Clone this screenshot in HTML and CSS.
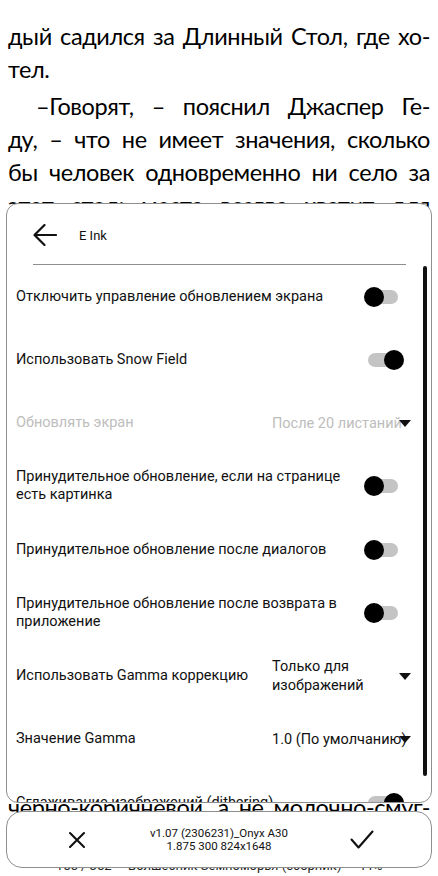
FILE: index.html
```html
<!DOCTYPE html>
<html lang="ru">
<head>
<meta charset="utf-8">
<title>E Ink</title>
<link rel="stylesheet" href="styles.css">
</head>
<body>
<div class="page">
  <div class="book">
    <p class="par">
      <span class="ln">дый садился за Длинный Стол, где хо-</span>
      <span class="ln end">тел.</span>
    </p>
    <p class="par">
      <span class="ln ind">–Говорят, – пояснил Джаспер Ге-</span>
      <span class="ln">ду, – что не имеет значения, сколько</span>
      <span class="ln">бы человек одновременно ни село за</span>
      <span class="ln">этот стол: места всегда хватит для</span>
      <span class="ln">всех, и стол будет такой длины,</span>
      <span class="ln">как нужно. Одни полагают, что</span>
      <span class="ln">это сделано с помощью магии,</span>
      <span class="ln">другие – что стол растёт сам,</span>
      <span class="ln">как дерево, а третьи говорят,</span>
      <span class="ln end">что всё это выдумки.</span>
    </p>
    <p class="par">
      <span class="ln ind">Гед промолчал. Он смотрел</span>
      <span class="ln">на окна, за которыми уже</span>
      <span class="ln">сгущались сумерки, и думал</span>
      <span class="ln">о том, как далеко теперь его</span>
      <span class="ln">родной остров. Джаспер был</span>
      <span class="ln">одет в плащ с серебряной</span>
      <span class="ln end">застёжкой.</span>
    </p>
    <p class="par">
      <span class="ln ind">Рядом с ним сидел другой</span>
      <span class="ln">юноша, коренастый, по имени</span>
      <span class="ln">Ветч. Он был родом с Восточ-</span>
      <span class="ln">ного Предела, и кожа у него была</span>
      <span class="ln">черно-коричневой, а не молочно-смуг-</span>
      <span class="ln">лой, как у людей Внутренних</span>
      <span class="ln end">островов.</span>
    </p>
  </div>
  <div class="footer">155 / 352 — Волшебник Земноморья (сборник) — 44%</div>

  <div class="dialog">
    <div class="head">
      <svg class="back" width="24" height="22" viewBox="0 0 24 22">
        <path d="M1.5 11H23M11.5 1L1.5 11L11.5 21" fill="none" stroke="#111" stroke-width="2.2" stroke-linecap="round" stroke-linejoin="round"/>
      </svg>
      <span class="title">E Ink</span>
    </div>
    <div class="rule"></div>
    <div class="list">
      <div class="row">
        <span class="label">Отключить управление обновлением экрана</span>
        <span class="switch"><span class="track"></span><span class="thumb"></span></span>
      </div>
      <div class="row">
        <span class="label">Использовать Snow Field</span>
        <span class="switch on"><span class="track"></span><span class="thumb"></span></span>
      </div>
      <div class="row disabled">
        <span class="label">Обновлять экран</span>
        <span class="value nowrap">После 20 листаний</span>
        <span class="caret"></span>
      </div>
      <div class="row">
        <span class="label">Принудительное обновление, если на странице есть картинка</span>
        <span class="switch"><span class="track"></span><span class="thumb"></span></span>
      </div>
      <div class="row">
        <span class="label">Принудительное обновление после диалогов</span>
        <span class="switch"><span class="track"></span><span class="thumb"></span></span>
      </div>
      <div class="row">
        <span class="label">Принудительное обновление после возврата в приложение</span>
        <span class="switch"><span class="track"></span><span class="thumb"></span></span>
      </div>
      <div class="row">
        <span class="label">Использовать Gamma коррекцию</span>
        <span class="value">Только для изображений</span>
        <span class="caret"></span>
      </div>
      <div class="row">
        <span class="label">Значение Gamma</span>
        <span class="value nowrap">1.0 (По умолчанию)</span>
        <span class="caret"></span>
      </div>
      <div class="row">
        <span class="label">Сглаживание изображений (dithering)</span>
        <span class="switch on"><span class="track"></span><span class="thumb"></span></span>
      </div>
    </div>
    <div class="scroll"></div>
  </div>

  <div class="bar">
    <span class="icon">
      <svg width="18" height="18" viewBox="0 0 18 18">
        <path d="M2 2L16 16M16 2L2 16" fill="none" stroke="#111" stroke-width="2.1" stroke-linecap="round"/>
      </svg>
    </span>
    <span class="ver">v1.07 (2306231)_Onyx A30<br>1.875 300 824x1648</span>
    <span class="icon">
      <svg width="24" height="20" viewBox="0 0 24 20">
        <path d="M1.5 9.5L8.5 17.5L22.5 1.5" fill="none" stroke="#111" stroke-width="2.1" stroke-linecap="round" stroke-linejoin="round"/>
      </svg>
    </span>
  </div>
</div>
</body>
</html>
```

FILE: styles.css
```css
html, body {
  margin: 0;
  padding: 0;
  background: #fff;
}

.page {
  position: relative;
  width: 438px;
  height: 876px;
  overflow: hidden;
  display: flex;
  flex-direction: column;
  background: #fff;
}

.book {
  flex: 1;
  min-height: 0;
  overflow: hidden;
  padding: 19.5px 8px 0;
  font-family: Lato, "Open Sans", sans-serif;
  font-size: 23.5px;
  letter-spacing: -0.4px;
  line-height: 33px;
  color: #000;
}

.par {
  margin: 0 0 4px;
}

.ln {
  display: block;
  text-align: justify;
  text-align-last: justify;
}

.ln.end {
  text-align-last: left;
}

.ln.ind {
  padding-left: 28px;
}

.footer {
  height: 20px;
  line-height: 20px;
  font-family: Roboto, sans-serif;
  font-size: 13px;
  color: #222;
  text-align: center;
  white-space: nowrap;
}

/* dialog */
.dialog {
  position: absolute;
  left: 6px;
  top: 203px;
  width: 424px;
  height: 598px;
  border: 1px solid #8e8e8e;
  border-radius: 12px;
  background: #fff;
  overflow: hidden;
  font-family: Roboto, sans-serif;
  color: #111;
}

.head {
  height: 60px;
  display: flex;
  align-items: center;
  padding-left: 26px;
}

.back {
  display: block;
  margin-top: 2px;
}

.title {
  margin-left: 22px;
  font-size: 13px;
  margin-top: 2px;
}

.rule {
  height: 1px;
  background: #8e8e8e;
  margin: 0 25px 0 26px;
}

.list {
  display: flex;
  flex-direction: column;
}

.row {
  height: 63.25px;
  flex: none;
  display: flex;
  align-items: center;
  padding: 0 20px 0 9px;
  font-size: 14.5px;
  line-height: 18px;
}

.label {
  flex: 1;
  padding-right: 12px;
}

.row.disabled .label,
.row.disabled .value {
  color: #bdbdbd;
}

.value {
  width: 127px;
  flex: none;
  line-height: 19px;
}

.value.nowrap {
  white-space: nowrap;
}

.caret {
  flex: none;
  width: 0;
  height: 0;
  border-left: 6.5px solid transparent;
  border-right: 6.5px solid transparent;
  border-top: 7px solid #111;
  position: relative;
  z-index: 1;
}

.switch {
  position: relative;
  flex: none;
  width: 40px;
  height: 20px;
  margin-right: 7px;
}

.track {
  position: absolute;
  left: 4px;
  top: 3px;
  width: 30px;
  height: 14px;
  border-radius: 7px;
  background: #c4c4c4;
}

.thumb {
  position: absolute;
  left: 0;
  top: 0;
  width: 20px;
  height: 20px;
  border-radius: 50%;
  background: #000;
}

.switch.on .thumb {
  left: 20px;
}

.scroll {
  position: absolute;
  right: 4px;
  top: 62px;
  width: 4px;
  height: 510px;
  border-radius: 2px;
  background: #111;
}

/* bottom bar */
.bar {
  position: absolute;
  left: 6px;
  top: 811px;
  width: 424px;
  height: 55px;
  border: 1px solid #8e8e8e;
  border-radius: 16px;
  background: #fff;
  display: grid;
  grid-template-columns: 139px 1fr 139px;
  align-items: center;
}

.icon {
  display: flex;
  justify-content: center;
  align-items: center;
}

.icon svg {
  display: block;
}

.ver {
  text-align: center;
  font-family: Roboto, sans-serif;
  font-size: 11.5px;
  line-height: 13px;
  color: #111;
}
```
